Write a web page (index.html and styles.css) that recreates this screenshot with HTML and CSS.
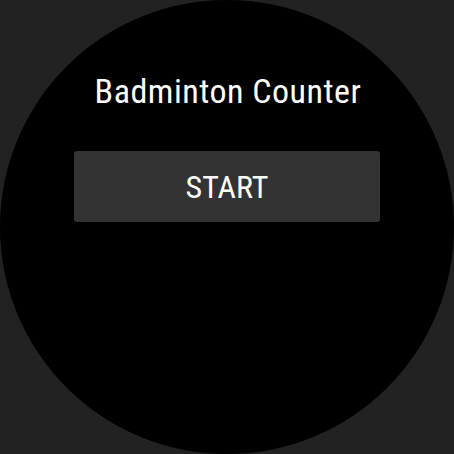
FILE: index.html
```html
<!DOCTYPE html>
<html>
<head>
<meta charset="utf-8">
<link rel="stylesheet" href="styles.css">
</head>
<body>
<div class="screen">
  <div class="title">Badminton Counter</div>
  <button class="start">START</button>
</div>
</body>
</html>
```
FILE: styles.css
```css
html, body {
  margin: 0;
  padding: 0;
  background: #222222;
  width: 454px;
  height: 454px;
  overflow: hidden;
}
.screen {
  width: 454px;
  height: 454px;
  border-radius: 50%;
  background: #000;
  display: flex;
  flex-direction: column;
  align-items: center;
  box-sizing: border-box;
  padding-top: 71px;
  font-family: Roboto, "Liberation Sans", sans-serif;
  color: #fff;
}
.title {
  font-size: 34px;
  line-height: 40px;
  margin-left: 2px;
  font-stretch: 85%;
  letter-spacing: 0.5px;
}
.start {
  margin-top: 40px;
  width: 306px;
  height: 71px;
  background: #333333;
  border: none;
  border-radius: 3px;
  color: #fff;
  font-family: Roboto, "Liberation Sans", sans-serif;
  font-size: 32px;
  font-stretch: 85%;
  padding: 0;
}
```
